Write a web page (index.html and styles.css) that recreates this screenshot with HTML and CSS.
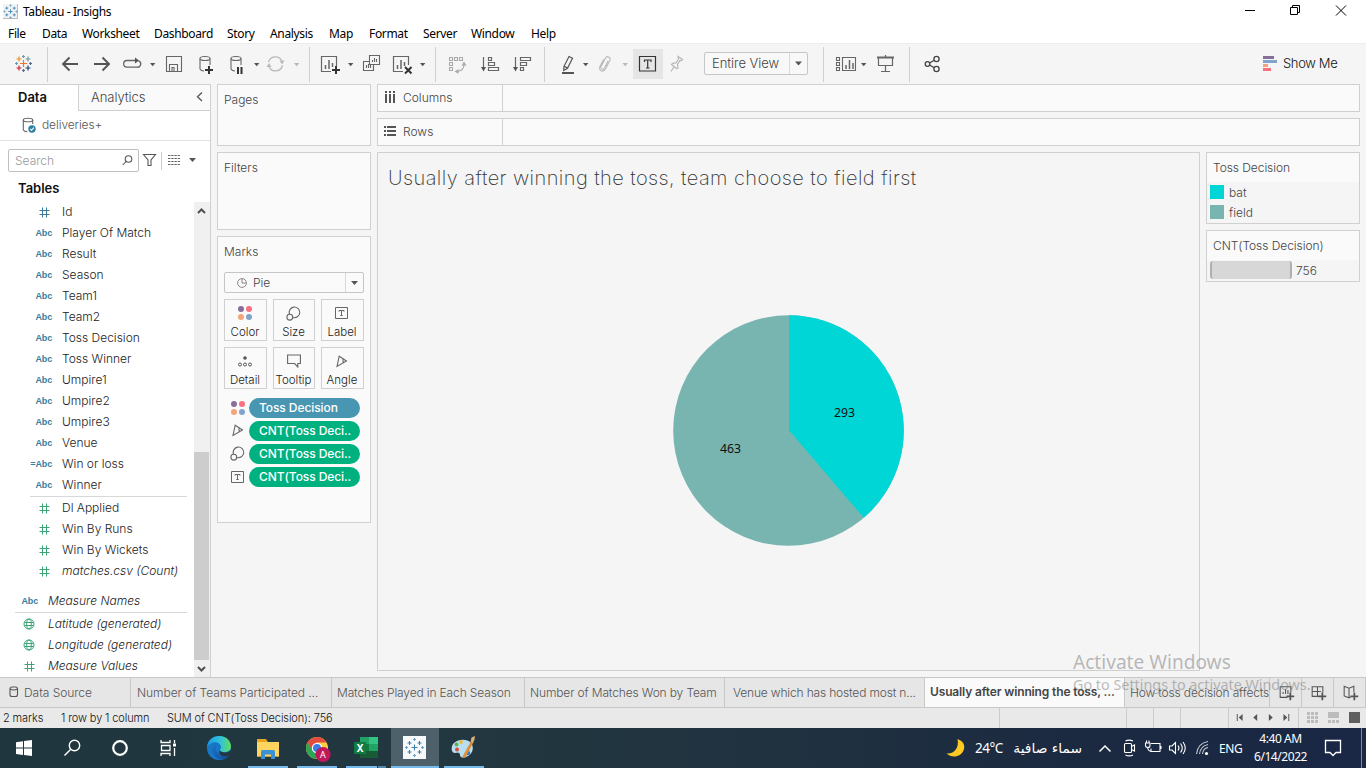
FILE: index.html
```html
<!DOCTYPE html>
<html lang="en">
<head>
<meta charset="utf-8">
<title>Tableau - Insighs</title>
<link rel="stylesheet" href="styles.css">
</head>
<body>
<svg class="defs" width="0" height="0">
  <defs>
    <symbol id="caret" viewBox="0 0 6 4" overflow="visible"><path d="M0 0h5.4L2.7 3.2z"/></symbol>
    <symbol id="hash" viewBox="0 0 11 11"><path d="M3.500.5v10M7.500.5v10M.5 3.500h10M.5 7.500h10" fill="none" stroke="currentColor"/></symbol>
    <symbol id="globe" viewBox="0 0 12 12"><g fill="none" stroke="currentColor"><circle cx="6" cy="6" r="5"/><ellipse cx="6" cy="6" rx="2.300" ry="5"/><path d="M1.500 4.500h9M1.500 7.500h9"/></g></symbol>
    <symbol id="sizeI" viewBox="0 0 15 15"><g fill="none" stroke="#666" stroke-width="1.100"><path d="M3.500 8.200A5.300 5.300 0 1 1 6.800 11.400"/><circle cx="3.800" cy="11.200" r="2.900"/></g></symbol>
    <symbol id="angleI" viewBox="0 0 12 13"><path d="M3.200 1.200 10.500 6 1 11.500zM7 3.700q-.4 3 .9 3.900" fill="none" stroke="#666" stroke-width="1.100"/></symbol>
    <symbol id="labelI" viewBox="0 0 14 12"><path d="M.5.5h12v11H.5zM4 4.700V3.500h5v1.200M6.500 3.500v5M5.300 8.500h2.400" fill="none" stroke="#666"/></symbol>
    <symbol id="colorI" viewBox="0 0 14 14"><circle cx="3" cy="3" r="3" fill="#86709a"/><circle cx="11" cy="3" r="3" fill="#f8707f"/><circle cx="3" cy="11" r="3" fill="#f2a47a"/><circle cx="11" cy="11" r="3" fill="#80a4cc"/></symbol>
    <symbol id="blueLogo" viewBox="0 0 20 20"><g fill="none" stroke="#3d80ab" stroke-width="1.100"><path d="M10 7v6M7 10h6M5 3.500v4M3 5.500h4M15 3.500v4M13 5.500h4M5 12.500v4M3 14.500h4M15 12.500v4M13 14.500h4"/><path d="M10 .5v3M8.500 2h3M10 16.500v3M8.500 18h3M2 8.500v3M.5 10h3M18 8.500v3M16.500 10h3" stroke="#6f9fc0"/></g></symbol>
  </defs>
</svg>

<header class="titlebar">
  <span class="app-icon"><svg width="15" height="15"><use href="#blueLogo"/></svg></span>
  <span class="app-title">Tableau - Insighs</span>
  <svg class="win-buttons" width="126" height="23" viewBox="1240 0 126 23" fill="none" stroke="#000"><path d="M1245 10.500h10M1290.500 7.500h7v7h-7zM1292.500 7.500v-2h7v7h-2M1336 5.500l10 10M1346 5.500l-10 10"/></svg>
</header>
<nav class="menubar">
  <span class="m-file">File</span><span class="m-data">Data</span><span class="m-worksheet">Worksheet</span><span class="m-dashboard">Dashboard</span><span class="m-story">Story</span><span class="m-analysis">Analysis</span><span class="m-map">Map</span><span class="m-format">Format</span><span class="m-server">Server</span><span class="m-window">Window</span><span>Help</span>
</nav>

<div class="toolbar">
  <svg width="47" height="41" viewBox="0 43 47 41" fill="none"><g stroke-width="1.200"><path d="M23.500 60v7M20 63.500h7" stroke="#e8762d"/><path d="M19 56.500v5M16.500 59h5" stroke="#eb912c"/><path d="M28 56.500v5M25.500 59h5" stroke="#7199a6"/><path d="M19 65.500v5M16.500 68h5" stroke="#c72035"/><path d="M28 65.500v5M25.500 68h5" stroke="#1f447e"/><path d="M23.500 55v3M22 56.500h3M16.500 62v3M15 63.500h3" stroke="#7199a6"/><path d="M23.500 69v3M22 70.500h3M30.500 62v3M29 63.500h3" stroke="#5c6692"/></g></svg>
  <i class="sep"></i>
  <svg width="38" height="41" viewBox="48 43 38 41" fill="none" stroke="#555" stroke-width="1.900"><path d="M78 64H63.500M69.500 57.500 63 64l6.500 6.500"/></svg>
  <svg width="32" height="41" viewBox="86 43 32 41" fill="none" stroke="#555" stroke-width="1.900"><path d="M94 64h14.500M102.500 57.500 109 64l-6.500 6.500"/></svg>
  <svg width="42" height="41" viewBox="118 43 42 41" fill="none" stroke="#666" stroke-width="1.300"><path d="M130 60.500h-3a3.300 3.300 0 0 0 0 6.700h10a3.300 3.300 0 0 0 1.500-6.400M129 60.500h7"/><path d="M135 57.500l4 3-4 3z" fill="#555" stroke="none"/><use href="#caret" x="150" y="63" width="6" height="4" fill="#555" stroke="none"/></svg>
  <svg width="30" height="41" viewBox="160 43 30 41" fill="none" stroke="#666" stroke-width="1.100"><path d="M166.500 56.500h15v15h-15zM169.500 71v-6.500h8V71M172 71v-3.500h2V71"/></svg>
  <svg width="32" height="41" viewBox="190 43 32 41" fill="none" stroke="#666" stroke-width="1.100"><ellipse cx="205" cy="58.500" rx="5" ry="2"/><path d="M200 58.500V69q1 2 4 2M210 58.500V65"/><path d="M209 66v8M205 70h8" stroke="#333" stroke-width="2"/></svg>
  <svg width="43" height="41" viewBox="222 43 43 41" fill="none" stroke="#666" stroke-width="1.100"><ellipse cx="236" cy="58.500" rx="5" ry="2"/><path d="M231 58.500V69q1 2 4 2M241 58.500V65"/><path d="M238 67v7M241.500 67v7" stroke="#333" stroke-width="2"/><use href="#caret" x="254" y="63" width="6" height="4" fill="#555" stroke="none"/></svg>
  <svg width="44" height="41" viewBox="265 43 44 41" fill="none" stroke="#b8b8b8" stroke-width="1.300"><path d="M268.500 62a7.200 7.200 0 0 1 13.200-1.500M282.500 65.500a7.200 7.200 0 0 1-13.200 1.800"/><path d="M279.500 60.500h5l-2.500 4zM266.500 67h5l-2.500-4z" fill="#b8b8b8" stroke="none"/><use href="#caret" x="294" y="63" width="6" height="4" fill="#b8b8b8" stroke="none"/></svg>
  <i class="sep"></i>
  <svg width="48" height="41" viewBox="310 43 48 41" fill="none" stroke="#666" stroke-width="1.200"><path d="M331 71.500h-9.500v-15h15V66"/><path d="M325.500 65v4M329 60v9M332.500 63v4" stroke-width="1.500"/><path d="M336 66v8M332 70h8" stroke="#333" stroke-width="2"/><use href="#caret" x="348" y="63" width="6" height="4" fill="#555" stroke="none"/></svg>
  <svg width="30" height="41" viewBox="358 43 30 41" fill="none" stroke="#666" stroke-width="1.100"><path d="M369.500 55.500h10v9h-10zM369.500 61.500h-6v9h10v-6M372.500 62v-2M374.500 62v-4M376.500 62v-3M366.500 68v-3M368.500 68v-4M370.500 68v-3"/></svg>
  <svg width="47" height="41" viewBox="388 43 47 41" fill="none" stroke="#666" stroke-width="1.200"><path d="M403 71.500h-9.500v-15h15V65"/><path d="M397.500 65v4M401 60v9M404.500 62v4" stroke-width="1.500"/><path d="M405 67l6.500 6.500M411.500 67l-6.500 6.500" stroke="#333" stroke-width="2"/><use href="#caret" x="420" y="63" width="6" height="4" fill="#555" stroke="none"/></svg>
  <i class="sep"></i>
  <svg width="37" height="41" viewBox="436 43 37 41" fill="none" stroke="#aaa" stroke-width="1.100"><path d="M449.500 57.500h3v3h-3zM454.500 57.500h3v3h-3zM459.500 57.500h3v3h-3zM449.500 62.500h3v3h-3zM449.500 67.500h3v3h-3zM464 64q0 7-7 7.500"/><path d="M461.500 65.500h5l-2.500-4zM458.500 69v5l-4-2.500z" fill="#aaa" stroke="none"/></svg>
  <svg width="32" height="41" viewBox="473 43 32 41" fill="none" stroke="#666" stroke-width="1.200"><path d="M483.500 57v12M488.500 57.500h3v3h-3zM488.500 62.500h6v3h-6zM488.500 67.500h10v3h-10z"/><path d="M481 67h5l-2.500 4.500z" fill="#555" stroke="none"/></svg>
  <svg width="39" height="41" viewBox="505 43 39 41" fill="none" stroke="#666" stroke-width="1.200"><path d="M515.500 57v12M520.500 57.500h10v3h-10zM520.500 62.500h6v3h-6zM520.500 67.500h3v3h-3z"/><path d="M513 67h5l-2.500 4.500z" fill="#555" stroke="none"/></svg>
  <i class="sep"></i>
  <svg width="48" height="41" viewBox="545 43 48 41" fill="none" stroke="#555" stroke-width="1.200"><path d="M569 56.500l3.500 1.800-5 10-3.800 2.200.3-4.200zM564.300 66.300l3.200 1.800"/><path d="M562 73h12" stroke-width="2"/><use href="#caret" x="583" y="63" width="6" height="4" fill="#555" stroke="none"/></svg>
  <svg width="40" height="41" viewBox="593 43 40 41" fill="none" stroke="#b8b8b8" stroke-width="1.100"><path d="M608 61l-3.500 7c-1.500 2.500-4.500 1-3.500-1.500l4.500-8.500c1.500-2.500 5.500-1 4.500 2l-4.500 9c-2.500 4-7.500 1.500-5.500-2.500l3.500-7"/><use href="#caret" x="622.500" y="63" width="6" height="4" fill="#b8b8b8" stroke="none"/></svg>
  <span class="label-toggle"><svg width="30" height="30" viewBox="633 49 30 30" fill="none" stroke="#333" stroke-width="1.200"><path d="M639.500 56.500h16v14.500h-16zM644.500 62v-2h6.500v2M647.700 60v8M646 68h3.500"/></svg></span>
  <svg width="41" height="41" viewBox="663 43 41 41" fill="none" stroke="#b8b8b8" stroke-width="1.200"><path d="M678 56.500l4.500 3-1 1.200-1.500-.2-2.500 4 .5 3.500-1.500.5-5-4 1.200-1.200 3.300-.4 2.600-3.900zM674 66.500l-3 5"/></svg>
  <span class="combo"><b>Entire View</b><svg width="17" height="21" viewBox="790 53 17 21"><path d="M795 61.500h7l-3.500 4z" fill="#555"/></svg></span>
  <svg width="15" height="41"></svg>
  <i class="sep"></i>
  <svg width="45" height="41" viewBox="824 43 45 41" fill="none" stroke="#666" stroke-width="1.100"><path d="M836.500 57.500h3v3h-3zM836.500 62.500h3v3h-3zM836.500 67.500h3v3h-3zM842.500 57.500h13v13h-13z"/><path d="M846 65v4M849.500 60v9M853 63v6" stroke-width="1.500"/><use href="#caret" x="861" y="63" width="6" height="4" fill="#555" stroke="none"/></svg>
  <svg width="40" height="41" viewBox="869 43 40 41" fill="none" stroke="#666" stroke-width="1.200"><path d="M878.500 57v8.500h14V57M885.500 65.500v6M881 71.500h9M885.500 55v2"/><path d="M877 57.500h17" stroke-width="2"/></svg>
  <i class="sep"></i>
  <svg width="40" height="41" viewBox="910 43 40 41" fill="none" stroke="#444" stroke-width="1.300"><circle cx="927.500" cy="64" r="2.300"/><circle cx="936.500" cy="59" r="2.600"/><circle cx="936.500" cy="69" r="2.600"/><path d="M929.500 63l4.700-2.700M929.500 65l4.700 2.700"/></svg>
  <span class="showme"><svg width="14" height="15"><path d="M0 0h11v3H0z" fill="#86709a"/><path d="M0 4h14v3H0z" fill="#80a4cc"/><path d="M0 8h5v3H0z" fill="#f2a47a"/><path d="M0 12h8v3H0z" fill="#f8707f"/></svg><span>Show Me</span></span>
</div>

<main class="main">
  <aside class="side">
    <div class="side-tabs"><div class="tab-data">Data</div><div class="tab-analytics"><span>Analytics</span><svg width="8" height="10" fill="none" stroke="#555" stroke-width="1.300"><path d="M6 .5 1.500 4.700 6 8.900"/></svg></div></div>
    <div class="source"><svg width="14" height="16" viewBox="22 117 14 16" fill="none" stroke="#666" stroke-width="1.100"><ellipse cx="28" cy="120" rx="4.700" ry="1.800"/><path d="M23.300 120v10q1 1.600 4 1.600M32.700 120v4"/><circle cx="32" cy="129" r="3.700" fill="#2f7fa5" stroke="none"/><path d="M30.300 129l1.300 1.300 2.300-2.600" stroke="#fff"/></svg><span>deliveries+</span></div>
    <div class="search-row">
      <div class="search"><span>Search</span><svg width="11" height="11" fill="none" stroke="#555" stroke-width="1.100"><circle cx="6.500" cy="4" r="3.300"/><path d="M4 6.500.8 10"/></svg></div>
      <svg width="19" height="23" viewBox="139 149 19 23" fill="none" stroke="#555" stroke-width="1.100"><path d="M143.500 154.500h12l-4.500 5.500v5.500h-3V160z"/></svg>
      <i class="side-sep"></i>
      <svg width="46" height="23" viewBox="163 149 46 23" fill="none" stroke="#666"><path d="M169 155.500h12M169 158.500h12M169 161.500h12M169 164.500h12" stroke-dasharray="2.400 .8"/><path d="M190 158h7l-3.500 4z" fill="#555" stroke="none"/></svg>
    </div>
    <h2 class="tables-title">Tables</h2>
    <div class="fields-wrap">
      <div class="fields">
        <div class="f dim"><svg class="ic" width="11" height="11"><use href="#hash"/></svg><span>Id</span></div>
        <div class="f dim"><em>Abc</em><span>Player Of Match</span></div>
        <div class="f dim"><em>Abc</em><span>Result</span></div>
        <div class="f dim"><em>Abc</em><span>Season</span></div>
        <div class="f dim"><em>Abc</em><span>Team1</span></div>
        <div class="f dim"><em>Abc</em><span>Team2</span></div>
        <div class="f dim"><em>Abc</em><span>Toss Decision</span></div>
        <div class="f dim"><em>Abc</em><span>Toss Winner</span></div>
        <div class="f dim"><em>Abc</em><span>Umpire1</span></div>
        <div class="f dim"><em>Abc</em><span>Umpire2</span></div>
        <div class="f dim"><em>Abc</em><span>Umpire3</span></div>
        <div class="f dim"><em>Abc</em><span>Venue</span></div>
        <div class="f dim"><em>=Abc</em><span>Win or loss</span></div>
        <div class="f dim"><em>Abc</em><span>Winner</span></div>
        <hr class="rule-in">
        <div class="f mea"><svg class="ic" width="11" height="11"><use href="#hash"/></svg><span>Dl Applied</span></div>
        <div class="f mea"><svg class="ic" width="11" height="11"><use href="#hash"/></svg><span>Win By Runs</span></div>
        <div class="f mea"><svg class="ic" width="11" height="11"><use href="#hash"/></svg><span>Win By Wickets</span></div>
        <div class="f mea gen"><svg class="ic" width="11" height="11"><use href="#hash"/></svg><span>matches.csv (Count)</span></div>
        <div class="f dim gen outer first"><em>Abc</em><span>Measure Names</span></div>
        <hr class="rule-out">
        <div class="f mea gen outer"><svg class="ic" width="12" height="12"><use href="#globe"/></svg><span>Latitude (generated)</span></div>
        <div class="f mea gen outer"><svg class="ic" width="12" height="12"><use href="#globe"/></svg><span>Longitude (generated)</span></div>
        <div class="f mea gen outer"><svg class="ic" width="11" height="11"><use href="#hash"/></svg><span>Measure Values</span></div>
      </div>
      <div class="scroll">
        <svg width="16" height="17" fill="none" stroke="#505050" stroke-width="2"><path d="M4 11l3.500-3.500L11 11"/></svg>
        <div class="thumb"></div>
        <svg width="16" height="17" fill="none" stroke="#505050" stroke-width="2"><path d="M4 7l3.500 3.500L11 7"/></svg>
      </div>
    </div>
  </aside>

  <section class="cards">
    <div class="card pages">Pages</div>
    <div class="card filters">Filters</div>
    <div class="card marks">
      <div>Marks</div>
      <div class="mark-type"><svg width="10" height="10" fill="none" stroke="#888"><circle cx="5" cy="5" r="4.400"/><path d="M5 1v4h4"/></svg><span>Pie</span><svg class="drop" width="18" height="19"><path d="M5 8h7l-3.500 4z" fill="#555"/></svg></div>
      <div class="mark-grid">
        <div><svg width="14" height="14"><use href="#colorI"/></svg><span>Color</span></div>
        <div><svg width="15" height="15"><use href="#sizeI"/></svg><span>Size</span></div>
        <div><svg width="14" height="12"><use href="#labelI"/></svg><span>Label</span></div>
        <div><svg width="14" height="11" fill="none" stroke="#555"><circle cx="7" cy="2" r="1.800" fill="#555" stroke="none"/><circle cx="2" cy="8.500" r="1.500"/><circle cx="7" cy="8.500" r="1.500"/><circle cx="12" cy="8.500" r="1.500"/></svg><span>Detail</span></div>
        <div><svg width="14" height="14" fill="none" stroke="#666" stroke-width="1.100"><path d="M.6 1h12.800v8.500h-2.600V13L7.500 9.500H.6z"/></svg><span>Tooltip</span></div>
        <div><svg width="12" height="13"><use href="#angleI"/></svg><span>Angle</span></div>
      </div>
      <div class="pill-row"><svg width="14" height="14"><use href="#colorI"/></svg><span class="pill blue">Toss Decision</span></div>
      <div class="pill-row"><svg width="12" height="13"><use href="#angleI"/></svg><span class="pill">CNT(Toss Deci..</span></div>
      <div class="pill-row"><svg width="15" height="15"><use href="#sizeI"/></svg><span class="pill">CNT(Toss Deci..</span></div>
      <div class="pill-row"><svg width="14" height="12"><use href="#labelI"/></svg><span class="pill">CNT(Toss Deci..</span></div>
    </div>
  </section>

  <section class="work">
    <div class="shelf"><div class="shelf-name"><svg width="12" height="12" fill="#555"><path d="M1 0h2v2H1zM5 0h2v2H5zM9 0h2v2H9zM1 3h2v9H1zM5 3h2v9H5zM9 3h2v9H9z"/></svg><span>Columns</span></div></div>
    <div class="shelf"><div class="shelf-name"><svg width="12" height="12" fill="#555"><path d="M0 1h2v2H0zM0 5h2v2H0zM0 9h2v2H0zM3 1h9v2H3zM3 5h9v2H3zM3 9h9v2H3z"/></svg><span>Rows</span></div></div>
    <div class="work-row">
      <div class="view">
        <h1>Usually after winning the toss, team choose to field first</h1>
        <svg class="pie" width="231" height="231" viewBox="673 315 231 231"><circle cx="788.500" cy="430.500" r="115.300" fill="#78b5b0"/><path d="M789 430.300V315.200A115.300 115.300 0 0 1 863.800 517.800z" fill="#00d6d6"/><text x="834" y="417">293</text><text x="720" y="453">463</text></svg>
      </div>
      <div class="legends">
        <div class="legend"><h3>Toss Decision</h3><div class="legend-body"><div><i class="sw bat"></i>bat</div><div><i class="sw field"></i>field</div></div></div>
        <div class="legend size-legend"><h3>CNT(Toss Decision)</h3><div class="legend-body"><i class="range"></i><span>756</span></div></div>
      </div>
    </div>
  </section>
</main>

<div class="tabs">
  <div class="t t0"><svg width="10" height="12" fill="none" stroke="#555" stroke-width="1.100"><rect x="1" y="1" width="7.500" height="9.500" rx="2"/><path d="M1 3q3.700 2 7.500 0"/></svg><span>Data Source</span></div>
  <div class="t t1">Number of Teams Participated ...</div>
  <div class="t t2">Matches Played in Each Season</div>
  <div class="t t3">Number of Matches Won by Team</div>
  <div class="t t4">Venue which has hosted most n...</div>
  <div class="t t5">Usually after winning the toss, ...</div>
  <div class="t t6">How toss decision affects</div>
  <svg class="tb" width="32" height="29" viewBox="1269 678 32 29" fill="none" stroke="#555" stroke-width="1.100"><path d="M1287 697.500h-7.500v-11h11v6M1282.500 694v-2M1285 694v-5M1287.500 694v-4"/><path d="M1290 692.500v8M1286 696.500h8" stroke-width="1.800"/></svg>
  <svg class="tb" width="32" height="29" viewBox="1301 678 32 29" fill="none" stroke="#555" stroke-width="1.100"><path d="M1319 696.500h-7.500v-10h11v6M1317 686.500v10M1311.500 691.500h9"/><path d="M1322 692.500v8M1318 696.500h8" stroke-width="1.800"/></svg>
  <svg class="tb" width="32" height="29" viewBox="1333 678 32 29" fill="none" stroke="#555" stroke-width="1.100"><path d="M1353.500 692v-6l-5 2-5-2v10l5 2 2-1M1348.500 688v10"/><path d="M1354 692.500v8M1350 696.500h8" stroke-width="1.800"/></svg>
</div>
<div class="status">
  <span class="s1">2 marks</span><span class="s2">1 row by 1 column</span><span class="s3">SUM of CNT(Toss Decision): 756</span>
  <i class="c1"></i><i class="c2"></i><i class="c3"></i><i class="c4"></i>
  <svg class="nav" width="71" height="20" viewBox="1228 708 71 20" fill="#555"><path d="M1236 714h1v7h-1zM1242 714v7l-4-3.500zM1257 714v7l-4-3.500zM1269 714v7l4-3.500zM1284 714v7l4-3.500zM1289 714h1v7h-1z"/></svg>
  <svg width="67" height="20" viewBox="1299 708 67 20"><path d="M1307 712h3v3h-3zM1311 712h3v3h-3zM1315 712h3v3h-3zM1307 716h3v3h-3zM1311 716h3v3h-3zM1315 716h3v3h-3zM1307 720h3v3h-3zM1311 720h3v3h-3zM1315 720h3v3h-3zM1328 712h11v6h-11zM1328 720h3v3h-3zM1332 720h3v3h-3zM1336 720h3v3h-3z" fill="#bcbcbc"/><path d="M1349 712h11v11h-11z" fill="#5f5f5f"/></svg>
</div>

<footer class="taskbar">
  <svg width="48" height="40" viewBox="0 728 48 40" fill="#fff"><path d="M16 742.200l7-1v6.400h-7zM24 741l8-1v7.600h-8zM16 748.500h7v6.400l-7-1zM24 748.500h8v7.600l-8-1.100z"/></svg>
  <svg width="48" height="40" viewBox="48 728 48 40" fill="none" stroke="#fff" stroke-width="1.400"><circle cx="74.500" cy="745.500" r="5.200"/><path d="M70.500 749.500l-6 6"/></svg>
  <svg width="48" height="40" viewBox="96 728 48 40" fill="none" stroke="#fff" stroke-width="2.200"><circle cx="120" cy="748" r="6.800"/></svg>
  <svg width="51" height="40" viewBox="144 728 51 40" fill="none" stroke="#fff" stroke-width="1.300"><path d="M161 740v2.500h9V740M161 756v-2.500h9V756M161.500 745.500h8.500v5h-8.500zM174.500 740v3M174.500 748v8"/><path d="M173 743.500h3v3h-3z" fill="#fff" stroke="none"/></svg>
  <svg width="51" height="40" viewBox="195 728 51 40"><defs><linearGradient id="e1" x1="0" x2="1"><stop offset="0" stop-color="#1a9be2"/><stop offset=".55" stop-color="#2fc2dc"/><stop offset="1" stop-color="#62dd58"/></linearGradient><linearGradient id="e2" x1="0" y1="0" x2="1" y2="1"><stop offset="0" stop-color="#1b78c9"/><stop offset="1" stop-color="#114b9b"/></linearGradient></defs><circle cx="219" cy="748" r="12" fill="#1878c8"/><path d="M207 747C208 739 214 736 219.500 736 227 736 231 741.500 231 746.500 231 751 227 752.500 223 752c-4-.5-3.500-2-2-4 .5-4-4-6.500-8-5.500-3 .7-5 2.500-6 4.500z" fill="url(#e1)"/><path d="M213 745c-3 6 1 14 8.500 14.500 3.500 0 6.500-2 8-4.500-6 2-14 0-13.500-8 .2-2 1.500-3.500 3-3.500-2-1-4.500-.5-6 1.500z" fill="url(#e2)"/><path d="M231.500 749c-1.500 3-5 3.800-8.500 3.200-2.500-.4-3.500-1.200-2.800-2.500-2.200 2-.7 6 3.800 6.600 3 .3 5-.6 6-2z" fill="#22373f"/></svg>
  <svg width="47" height="40" viewBox="246 728 47 40"><path d="M257 739h9l2 3h11v14.500h-22z" fill="#e5a820"/><path d="M257 742h22v14.500h-22z" fill="#ffd45f"/><path d="M261 759v-7.500q0-1.500 1.500-1.500h11q1.500 0 1.500 1.500v7.500h-4v-4.500h-6v4.500z" fill="#3b91d6"/><path class="open" d="M248 766h40v2h-40z"/></svg>
  <svg width="49" height="40" viewBox="293 728 49 40"><circle cx="317" cy="748" r="11" fill="#ffcd42"/><path d="M307.500 742.500A11 11 0 0 1 326.500 742.500H317l-5 8z" fill="#e24b3e"/><path d="M307.500 742.500A11 11 0 0 0 316 759l5-8.500h-8.500z" fill="#2da457"/><circle cx="317" cy="748" r="5.200" fill="#fff"/><circle cx="317" cy="748" r="4" fill="#397de8"/><circle cx="323" cy="754.500" r="7.600" fill="#c2185b"/><text x="323" y="758" text-anchor="middle" class="avatar">A</text><path class="open" d="M297 766h40v2h-40z"/></svg>
  <svg width="49" height="40" viewBox="342 728 49 40"><path d="M360 737h18v21h-18z" fill="#185c37"/><path d="M360 737h9v7h-9z" fill="#21a366"/><path d="M369 737h9v7h-9z" fill="#33c481"/><path d="M369 744h9v7h-9z" fill="#21a366"/><path d="M360 744h9v7h-9z" fill="#107c41"/><path d="M354 742h12v12h-12z" fill="#107c41"/><text x="360" y="752" text-anchor="middle" class="xl">X</text><path class="open" d="M346 766h31v2h-31z"/><path d="M378 766h8v2h-8z" fill="#5587ad"/></svg>
  <span class="task-active"><svg width="48" height="40" viewBox="391 728 48 40"><path d="M403 736h23v23h-23z" fill="#f7f9fa"/><use href="#blueLogo" x="404.500" y="737.500" width="20" height="20"/><path class="open" d="M391 766h48v2h-48z"/></svg></span>
  <svg width="49" height="40" viewBox="439 728 49 40"><path d="M453 744c4-5 14-6 18-1 4 5 1 12-5 14-4 1.500-6 0-6-2 0-3-3-2-5-2-4 0-4-6-2-9z" fill="#b7dff0"/><circle cx="457" cy="749.500" r="2" fill="#e0483a"/><circle cx="456.500" cy="744.500" r="1.900" fill="#5cb34c"/><circle cx="461" cy="742" r="1.900" fill="#f3b93a"/><circle cx="468" cy="753" r="2.200" fill="#3476c4"/><path d="M462 757.500L470.500 742l2.500 1.200-7.500 14.300z" fill="#e28d3a"/><path d="M470.500 742l1-4.500 3.500-1.500-.5 3.500-1.500 3.700z" fill="#d8b07a"/><path class="open" d="M444 766h40v2h-40z"/></svg>
  <div class="tray">
    <svg width="29" height="40" viewBox="946 728 29 40"><path d="M957.500 739c6 2 8 7 6 11.500-2.500 6-11 8.500-17 3 7 1 13-5 11-14.500z" fill="#ffc91f"/></svg>
    <span class="temp">24°C</span><span class="sky" dir="rtl">سماء صافية</span>
    <svg width="130" height="40" viewBox="1089 728 130 40" fill="none" stroke="#fff" stroke-width="1.100"><path d="M1099.500 751.500l5.500-5.500 5.500 5.500" stroke-width="1.500"/><rect x="1124.500" y="743.500" width="7" height="9" rx="1"/><path d="M1131.500 746.500l3-1.500v6l-3-1.500M1125.500 741q3.500-1.800 7.500 0M1125.500 755q3.500 1.800 7.500 0M1151 743.500h9v8h-9v-3M1161 746v3M1145.500 743h4.500v2.500q0 2-2.200 2t-2.300-2zM1146.500 740.500v2.500M1149 740.500v2.500M1147.700 747.500q0 3 3.300 4M1169.500 746h2.500l3.500-3.500v11l-3.500-3.500h-2.500zM1178 745.500q2 2.500 0 5M1180.500 743.500q3.500 4.500 0 9M1183 742q4.500 6 0 12"/><g stroke="#c0c7ce"><path d="M1196.500 754q1.500-11 11.500-12.500M1199.500 754q1-8 8.500-9.500M1202.500 754q.5-5.500 5.500-6.500"/></g><circle cx="1206.500" cy="753.500" r="1.600" fill="#fff" stroke="none"/></svg>
    <span class="lang">ENG</span>
    <span class="clock"><span>4:40 AM</span><span>6/14/2022</span></span>
    <svg width="50" height="40" viewBox="1316 728 50 40" fill="none" stroke="#fff" stroke-width="1.300"><path d="M1325.500 740.500h15v12h-4.500l-3 3-3-3h-4.500z"/><path d="M1361.500 728v40" stroke="#7d8798" stroke-width="1"/></svg>
  </div>
</footer>
<div class="activate"><p class="a1">Activate Windows</p><p class="a2">Go to Settings to activate Windows.</p></div>
</body>
</html>
```
FILE: styles.css
```css
* { box-sizing: border-box; }
body { margin: 0; width: 1366px; height: 768px; overflow: hidden; display: flex; flex-direction: column; background: #f5f5f5; color: #444; font-family: Inter, "Open Sans", sans-serif; font-size: 12px; font-weight: 300; white-space: nowrap; }
svg { display: block; flex: none; }
i, em, b { font-style: normal; font-weight: inherit; flex: none; }
h1, h2, h3, p { margin: 0; }
.defs { position: absolute; }

.titlebar { height: 23px; background: #fff; display: flex; align-items: center; color: #000; font: 12px/23px "Noto Sans", sans-serif; }
.app-icon { width: 15px; height: 15px; margin: 0 5px 1px 3px; background: #f0f3f5; border-right: 1px solid #bbb; border-bottom: 1px solid #bbb; }
.app-title { letter-spacing: -.4px; }
.win-buttons { margin-left: auto; }
.menubar { height: 20px; background: #fff; display: flex; padding-left: 8px; color: #000; font: 12px/22px "Noto Sans", sans-serif; letter-spacing: -.35px; }
.m-file { width: 34px; } .m-data { width: 40px; } .m-worksheet { width: 72px; } .m-dashboard { width: 73px; } .m-story { width: 43px; } .m-analysis { width: 59px; } .m-map { width: 40px; } .m-format { width: 54px; } .m-server { width: 48px; } .m-window { width: 60px; }

.toolbar { height: 41px; display: flex; align-items: center; border-top: 1px solid #ececec; }
.toolbar > svg { margin-top: -1px; }
.sep { width: 1px; height: 35px; background: #d0d0d0; margin-top: 1px; }
.label-toggle { background: #e5e5e5; width: 30px; height: 30px; }
.combo { width: 104px; height: 23px; border: 1px solid #c6c6c6; border-radius: 2px; display: flex; background: #f8f8f8; margin-top: -1px; }
.combo b { width: 85px; border-right: 1px solid #d8d8d8; padding-left: 7px; font-size: 13px; line-height: 20px; letter-spacing: -.05px; }
.showme { margin: -2px 0 0 313px; display: flex; align-items: center; gap: 6px; font-size: 13px; letter-spacing: -.35px; color: #111; }
.showme svg { margin-top: 1px; }

.main { height: 593px; display: flex; }
.side { width: 211px; background: #fff; border-right: 1px solid #d0d0d0; display: flex; flex-direction: column; }
.side-tabs { height: 27px; display: flex; border-top: 1px solid #d0d0d0; font-size: 13px; line-height: 25px; }
.tab-data { width: 78px; padding-left: 18px; font-weight: 600; color: #111; }
.tab-analytics { flex: 1; display: flex; align-items: center; justify-content: space-between; padding: 0 6px 1px 12px; background: #fafafa; border-left: 1px solid #d0d0d0; border-bottom: 1px solid #d0d0d0; letter-spacing: -.05px; }
.source { height: 30px; display: flex; align-items: center; gap: 6px; padding: 0 0 2px 22px; border-bottom: 1px solid #e2e2e2; color: #555; letter-spacing: -.1px; }
.source svg { margin-top: 1px; }
.search-row { height: 39px; display: flex; align-items: center; padding-left: 8px; }
.search { width: 131px; height: 23px; border: 1px solid #c0c0c0; border-radius: 2px; display: flex; flex: none; align-items: center; justify-content: space-between; padding: 0 5px 0 6px; color: #999; }
.side-sep { width: 1px; height: 18px; background: #ccc; margin-right: 5px; margin-left: 3px; }
.search-row > svg:last-child { margin-left: -5px; }
.tables-title { height: 22px; padding-left: 18px; font-size: 13px; line-height: 16px; font-weight: 600; color: #111; }
.fields-wrap { height: 475px; display: flex; overflow: hidden; }
.fields { width: 194px; overflow: hidden; color: #222; margin-top: -1px; }
.f { height: 21px; display: flex; align-items: center; padding-left: 28px; line-height: 21px; }
.f em { width: 34px; padding-right: 10px; text-align: right; font: bold 9px/21px "Liberation Sans", sans-serif; letter-spacing: -.15px; padding-top: 2px; }
.f .ic { margin: 1px 12px 0 11px; }
.dim em, .dim .ic { color: #3a7d9c; }
.mea .ic { color: #3ba577; }
.gen span { font-style: italic; }
.outer { padding-left: 14px; }
.outer .ic[width="12"] { margin: 0 13px 0 9px; }
.outer .ic[width="11"] { margin: 1px 13px 0 10px; }
.first { margin-top: 9px; }
hr { border: 0; height: 1px; margin: 1px 7px 0 30px; background: #d8d8d8; }
.rule-out { margin-left: 15px; }
.scroll { width: 16px; background: #f0f0f0; display: flex; flex-direction: column; justify-content: space-between; }
.thumb { width: 15px; height: 208px; background: #cdcdcd; margin-top: auto; }

.cards { width: 154px; margin-left: 6px; display: flex; flex-direction: column; gap: 6px; }
.card { border: 1px solid #d0d0d0; background: #fafafa; padding: 6px 6px; line-height: 17px; }
.pages { height: 62px; } .filters { height: 78px; } .marks { height: 287px; }
.mark-type { display: flex; align-items: center; height: 21px; width: 140px; border: 1px solid #c6c6c6; border-radius: 2px; margin-top: 12px; padding-left: 12px; gap: 6px; }
.drop { margin-left: auto; border-left: 1px solid #d8d8d8; }
.mark-grid { display: grid; grid-template-columns: 43px 42px 43px; grid-auto-rows: 42px; column-gap: 6px; row-gap: 6px; margin: 6px 0 7px; color: #222; font-size: 11.500px; }
.mark-grid > div { border: 1px solid #d0d0d0; display: grid; grid-template-rows: 26px 12px; justify-items: center; align-items: center; line-height: 12px; padding-right: 1px; }
.pill-row { height: 23px; display: grid; grid-template-columns: 25px 111px; align-items: center; }
.pill-row svg { justify-self: center; margin-left: 2px; }
.pill { height: 20px; border-radius: 10px; background: #00b180; color: #fff; font-size: 12px; font-weight: 500; line-height: 20px; padding-left: 10px; letter-spacing: -.08px; }
.blue { background: #4996b2; }

.work { margin-left: 6px; width: 983px; display: flex; flex-direction: column; gap: 6px; }
.shelf { height: 28px; border: 1px solid #d0d0d0; background: #fafafa; }
.shelf-name { width: 125px; height: 26px; border-right: 1px solid #d0d0d0; display: flex; align-items: center; gap: 7px; padding: 0 0 2px 6px; }
.work-row { display: flex; gap: 6px; }
.view { width: 823px; height: 519px; border: 1px solid #d0d0d0; padding: 12px 10px; }
.view h1 { font-size: 20px; line-height: 26px; font-weight: 200; letter-spacing: .43px; color: #333; }
.pie { margin: 124px 0 0 285px; }
.pie text { font: 12.300px "Noto Sans", sans-serif; fill: #111; }
.legends { width: 154px; display: flex; flex-direction: column; gap: 6px; }
.legend { height: 72px; border: 1px solid #d0d0d0; }
.legend h3 { height: 29px; background: #fafafa; font-size: 12px; font-weight: 300; line-height: 29px; padding-left: 6px; letter-spacing: -.06px; }
.legend-body { padding-left: 3px; }
.legend-body div { height: 20px; display: flex; align-items: center; gap: 5px; }
.sw { width: 14px; height: 14px; }
.bat { background: #00d6d6; } .field { background: #78b5b0; }
.size-legend { height: 52px; }
.size-legend .legend-body { display: flex; gap: 4px; line-height: 21px; }
.range { width: 82px; height: 18px; margin-top: 1px; background: #d7d7d7; border: solid #b0b0b0; border-width: 0 2px; border-radius: 3px; }

.tabs { height: 31px; border-top: 1px solid #c8c8c8; border-bottom: 1px solid #c8c8c8; background: #e6e6e6; display: flex; color: #555; line-height: 30px; letter-spacing: -.14px; }
.t { border-right: 1px solid #c8c8c8; padding-left: 6px; overflow: hidden; flex: none; }
.t0 { width: 131px; display: flex; padding-left: 9px; gap: 5px; letter-spacing: -.04px; } .t0 svg { margin-top: 8px; }
.t1 { width: 201px; letter-spacing: -.06px; } .t2 { width: 193px; padding-left: 5px; } .t3 { width: 200px; padding-left: 5px; } .t4 { width: 200px; padding-left: 8px; letter-spacing: -.17px; }
.t5 { width: 200px; padding-left: 5px; background: #fafafa; color: #444; font-weight: 600; line-height: 27px; }
.t6 { width: 145px; padding-left: 5px; letter-spacing: -.16px; }
.tb { border-right: 1px solid #c8c8c8; }
.status { height: 20px; background: #e9e9e9; display: flex; align-items: center; font-size: 11px; color: #111; padding-left: 3px; letter-spacing: -.12px; }
.s1 { width: 58px; } .s2 { width: 106px; } .s3 { width: 832px; }
.status i { height: 20px; border-left: 1px solid #ccc; }
.c1 { width: 127px; } .c2 { width: 27px; } .c3 { width: 27px; } .c4 { width: 48px; }
.nav { border-right: 1px solid #ccc; border-left: 1px solid #ccc; }
.taskbar { height: 40px; display: flex; background: linear-gradient(90deg, #20363f 0%, #22373f 35%, #1f3040 62%, #1b2941 80%, #1a2745 100%); color: #fff; font-family: "Noto Sans", sans-serif; font-weight: 400; }
.task-active { background: #4e616a; width: 48px; }
.open { fill: #76b9ed; }
.avatar { font: 9px "Noto Sans", sans-serif; fill: #fff; }
.xl { font: bold 10px "Noto Sans", sans-serif; fill: #fff; }
.tray { margin-left: 458px; display: flex; align-items: center; }
.temp { width: 36px; font-size: 13.500px; letter-spacing: -.5px; }
.sky { width: 78px; font-family: "DejaVu Sans", sans-serif; font-size: 13.800px; text-align: right; padding-right: 7px; }
.lang { width: 34px; font-size: 12px; letter-spacing: -.4px; }
.clock { width: 63px; display: grid; justify-items: center; font-size: 12px; line-height: 18px; letter-spacing: -.45px; padding-right: 8px; }
.activate { position: absolute; left: 1073px; top: 650px; color: rgba(120, 120, 120, .5); font-family: "Noto Sans", sans-serif; font-weight: 400; }
.a1 { font-size: 19.100px; line-height: 25px; }
.a2 { font-size: 14.350px; line-height: 20px; }
```
